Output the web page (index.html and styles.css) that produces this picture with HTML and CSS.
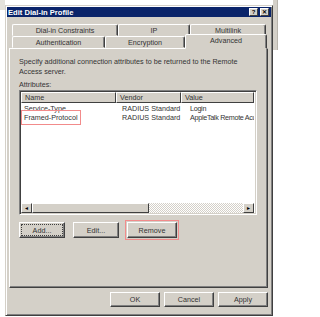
FILE: index.html
```html
<!DOCTYPE html>
<html lang="en">
<head>
    <meta charset="UTF-8">
    <title>Edit Dial-in Profile</title>
    <link rel="stylesheet" href="styles.css">
</head>
<body>
    <!-- windows behind the dialog -->
    <div class="back-left"></div>
    <div class="back-right"></div>

    <div class="window">
        <div class="titlebar">
            <span class="title">Edit Dial-in Profile</span>
            <span class="caption-btn">?</span>
            <span class="caption-btn close">&#x2715;</span>
        </div>

        <div class="tabs">
            <div class="tab-row">
                <div class="tab" style="width:106px">Dial-in Constraints</div>
                <div class="tab" style="width:72px">IP</div>
                <div class="tab" style="width:76px">Multilink</div>
            </div>
            <div class="tab-row front">
                <div class="tab" style="width:93px">Authentication</div>
                <div class="tab" style="width:80px">Encryption</div>
                <div class="tab selected" style="width:82px">Advanced</div>
            </div>
        </div>

        <div class="panel">
            <p class="intro">Specify additional connection attributes to be returned to the Remote Access server.</p>
            <div class="label">Attributes:</div>

            <div class="listview">
                <div class="lv-header">
                    <div class="col name">Name</div>
                    <div class="col vendor">Vendor</div>
                    <div class="col value">Value</div>
                </div>
                <div class="lv-body">
                    <div class="lv-row">
                        <div class="col name">Service-Type</div>
                        <div class="col vendor">RADIUS Standard</div>
                        <div class="col value">Login</div>
                    </div>
                    <div class="lv-row">
                        <div class="col name"><span class="mark">Framed-Protocol</span></div>
                        <div class="col vendor">RADIUS Standard</div>
                        <div class="col value">AppleTalk Remote Acc</div>
                    </div>
                </div>
                <div class="hscroll">
                    <div class="sb-btn">&#9666;</div>
                    <div class="sb-thumb"></div>
                    <div class="sb-track"></div>
                    <div class="sb-btn">&#9656;</div>
                </div>
            </div>

            <div class="actions">
                <button class="btn focus">Add...</button>
                <button class="btn">Edit...</button>
                <span class="mark-box"><button class="btn">Remove</button></span>
            </div>
        </div>

        <div class="footer">
            <button class="btn">OK</button>
            <button class="btn">Cancel</button>
            <button class="btn">Apply</button>
        </div>
    </div>
</body>
</html>
```

FILE: styles.css
```css
/* Desktop */
body {
    margin: 0;
    width: 320px;
    height: 317px;
    background: #ffffff;
    font-family: 'Liberation Sans', Arial, sans-serif;
    font-size: 7.2px;
    color: #333;
    position: relative;
    overflow: hidden;
}

.back-left {
    position: absolute;
    left: 0;
    top: 0;
    width: 5px;
    height: 10px;
    background: #e4e2dc;
}

.back-right {
    position: absolute;
    left: 273px;
    top: 0;
    width: 4px;
    height: 50px;
    background: #d4d0c8;
    border-right: 1px solid #b8b4ac;
}

/* Dialog window */
.window {
    position: absolute;
    left: 5px;
    top: 5px;
    width: 268px;
    height: 311px;
    box-sizing: border-box;
    background: #d4d0c8;
    border: 1px solid;
    border-color: #d4d0c8 #404040 #404040 #d4d0c8;
    box-shadow: inset 1px 1px 0 #fff, inset -1px -1px 0 #808080;
    padding: 1px;
    display: flex;
    flex-direction: column;
}

.titlebar {
    height: 10px;
    background: #0a246a;
    display: flex;
    align-items: center;
    padding: 0 2px 0 1px;
    gap: 1px;
}

.title {
    flex: 1;
    color: #fff;
    font-weight: bold;
    font-size: 7.6px;
}

.caption-btn {
    width: 9px;
    height: 8px;
    box-sizing: border-box;
    background: #d4d0c8;
    border: 1px solid;
    border-color: #fff #404040 #404040 #fff;
    font-size: 6px;
    font-weight: bold;
    line-height: 6px;
    text-align: center;
    color: #000;
}

.caption-btn.close {
    margin-left: 1px;
}

/* Tabs */
.tabs {
    margin: 7px 0 0 5px;
}

.tab-row {
    display: flex;
    height: 12px;
}

.tab {
    box-sizing: border-box;
    height: 12px;
    border: 1px solid;
    border-color: #fff #404040 transparent #fff;
    border-radius: 2px 2px 0 0;
    box-shadow: inset -1px 0 0 #808080;
    text-align: center;
    line-height: 11px;
}

.tab-row.front {
    position: relative;
    z-index: 1;
}

.tab.selected {
    height: 15px;
    margin-top: -2px;
    background: #d4d0c8;
}

/* Tab page */
.panel {
    height: 240px;
    margin: 0 3px 0 2px;
    box-sizing: border-box;
    border: 1px solid;
    border-color: #fff #404040 #404040 #fff;
    box-shadow: inset -1px -1px 0 #808080;
    padding: 8px 0 0 9px;
}

.intro {
    margin: 0;
    width: 232px;
    line-height: 10px;
}

.label {
    margin-top: 3px;
    line-height: 10px;
}

.listview {
    width: 238px;
    height: 125px;
    box-sizing: border-box;
    border: 1px solid;
    border-color: #808080 #fff #fff #808080;
    box-shadow: inset 1px 1px 0 #404040, inset -1px -1px 0 #d4d0c8;
    background: #fff;
    padding: 1px 2px 1px 1px;
    display: flex;
    flex-direction: column;
}

.lv-header {
    display: flex;
    height: 11px;
}

.lv-header .col {
    box-sizing: border-box;
    background: #d4d0c8;
    border: 1px solid;
    border-color: #fff #404040 #404040 #fff;
    line-height: 9px;
    padding-left: 3px;
}

.col.name { width: 95px; }
.col.vendor { width: 65px; }
.col.value { flex: 1; white-space: nowrap; overflow: hidden; }

.lv-body {
    flex: 1;
    padding-top: 1px;
}

.lv-row {
    display: flex;
    height: 9px;
    line-height: 9px;
}

.lv-row .col {
    padding-left: 3px;
}

.lv-row .col.value {
    letter-spacing: -0.3px;
}

.mark {
    outline: 1px solid #f28b8b;
    outline-offset: 2px;
}

/* Horizontal scrollbar */
.hscroll {
    display: flex;
    height: 10px;
}

.sb-btn,
.sb-thumb {
    box-sizing: border-box;
    background: #d4d0c8;
    border: 1px solid;
    border-color: #fff #404040 #404040 #fff;
}

.sb-btn {
    width: 11px;
    font-size: 6px;
    line-height: 8px;
    text-align: center;
    color: #000;
}

.sb-thumb {
    width: 117px;
}

.sb-track {
    flex: 1;
    background: repeating-conic-gradient(#fff 0 25%, #d4d0c8 0 50%) 0 0 / 2px 2px;
}

/* Buttons */
.actions {
    display: flex;
    gap: 8px;
    margin-top: 7px;
}

.btn {
    width: 46px;
    height: 16px;
    box-sizing: border-box;
    padding: 0;
    margin: 0;
    background: #d4d0c8;
    border: 1px solid;
    border-color: #fff #404040 #404040 #fff;
    box-shadow: inset -1px -1px 0 #808080;
    font-family: inherit;
    font-size: 7.2px;
    color: #333;
}

.btn.focus {
    outline: 1px dotted #404040;
    outline-offset: -3px;
}

.mark-box {
    display: flex;
    outline: 1px solid #f28b8b;
    outline-offset: 1px;
}

.mark-box .btn {
    width: 50px;
}

.footer {
    display: flex;
    justify-content: flex-end;
    gap: 4px;
    margin: 4px 3px 0 0;
}

.footer .btn {
    width: 50px;
    height: 15px;
}
```
